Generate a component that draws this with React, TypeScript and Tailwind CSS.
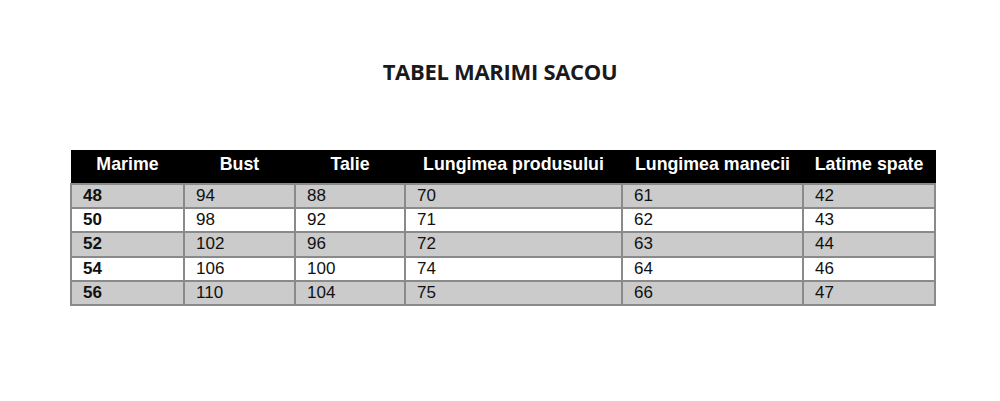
import React from 'react';

const columns = [
  { label: 'Marime', width: 113 },
  { label: 'Bust', width: 111 },
  { label: 'Talie', width: 110 },
  { label: 'Lungimea produsului', width: 217 },
  { label: 'Lungimea manecii', width: 181 },
  { label: 'Latime spate', width: 132 },
];

const rows = [
  ['48', '94', '88', '70', '61', '42'],
  ['50', '98', '92', '71', '62', '43'],
  ['52', '102', '96', '72', '63', '44'],
  ['54', '106', '100', '74', '64', '46'],
  ['56', '110', '104', '75', '66', '47'],
];

export default function App() {
  return (
    <div className="w-[1000px] h-[401px] bg-white pt-[57px]">
      <h1 className="text-center text-[22px] font-bold leading-[28px] text-[#1a1a1a] tracking-[-0.3px] font-['Open_Sans',sans-serif]">
        TABEL MARIMI SACOU
      </h1>

      <table className="ml-[70px] mt-[65px] border-collapse table-fixed font-['Liberation_Sans',Arial,sans-serif]">
        <colgroup>
          {columns.map((c) => (
            <col key={c.label} style={{ width: c.width }} />
          ))}
        </colgroup>
        <thead>
          <tr className="h-[33px] bg-black">
            {columns.map((c) => (
              <th
                key={c.label}
                className="border border-black pb-[6px] text-center align-middle text-[17.8px] leading-[22px] font-bold text-white"
              >
                {c.label}
              </th>
            ))}
          </tr>
        </thead>
        <tbody>
          {rows.map((row, i) => (
            <tr key={row[0]} className={`h-[24.4px] ${i % 2 === 0 ? 'bg-[#cbcbcb]' : 'bg-white'}`}>
              {row.map((cell, j) => (
                <td
                  key={j}
                  className={`border-2 border-[#8a8a8a] px-[11px] py-0 text-left align-middle text-[17px] leading-[20px] text-[#111] ${
                    j === 0 ? 'font-bold' : ''
                  }`}
                >
                  {cell}
                </td>
              ))}
            </tr>
          ))}
        </tbody>
      </table>
    </div>
  );
}
